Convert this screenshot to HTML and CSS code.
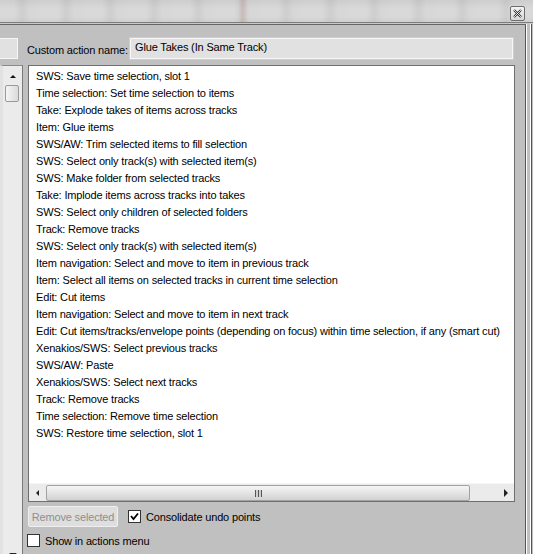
FILE: index.html
```html
<!DOCTYPE html>
<html lang="en">
<head>
  <meta charset="UTF-8" />
  <title>Custom Action</title>
  <link rel="stylesheet" href="styles.css">
</head>
<body>

<div class="titlebar">
  <button class="close-btn" title="Close">
    <svg width="9" height="9" viewBox="0 0 9 9">
      <path d="M1 1 L8 8 M8 1 L1 8" stroke="#333" stroke-width="2.2" />
      <path d="M1 1 L8 8 M8 1 L1 8" stroke="#fff" stroke-width="0.8" />
    </svg>
  </button>
</div>

<div class="workspace">
  <div class="side">
    <div class="stub-field"></div>
    <div class="vscroll">
      <span class="arrow-up"></span>
      <div class="vthumb"></div>
      <span class="arrow-down"></span>
    </div>
  </div>

  <div class="panel">
    <div class="name-row">
      <label class="name-label">Custom action name:</label>
      <div class="name-field">Glue Takes (In Same Track)</div>
    </div>

    <div class="action-list">
      <ul class="rows">
        <li>SWS: Save time selection, slot 1</li>
        <li>Time selection: Set time selection to items</li>
        <li>Take: Explode takes of items across tracks</li>
        <li>Item: Glue items</li>
        <li>SWS/AW: Trim selected items to fill selection</li>
        <li>SWS: Select only track(s) with selected item(s)</li>
        <li>SWS: Make folder from selected tracks</li>
        <li>Take: Implode items across tracks into takes</li>
        <li>SWS: Select only children of selected folders</li>
        <li>Track: Remove tracks</li>
        <li>SWS: Select only track(s) with selected item(s)</li>
        <li>Item navigation: Select and move to item in previous track</li>
        <li>Item: Select all items on selected tracks in current time selection</li>
        <li>Edit: Cut items</li>
        <li>Item navigation: Select and move to item in next track</li>
        <li>Edit: Cut items/tracks/envelope points (depending on focus) within time selection, if any (smart cut)</li>
        <li>Xenakios/SWS: Select previous tracks</li>
        <li>SWS/AW: Paste</li>
        <li>Xenakios/SWS: Select next tracks</li>
        <li>Track: Remove tracks</li>
        <li>Time selection: Remove time selection</li>
        <li>SWS: Restore time selection, slot 1</li>
      </ul>
      <div class="hscroll">
        <div class="hbtn"><span class="arrow-left"></span></div>
        <div class="hthumb"><span class="grip"></span></div>
        <div class="htrack"></div>
        <div class="hbtn"><span class="arrow-right"></span></div>
      </div>
    </div>

    <div class="button-row">
      <button class="btn" disabled>Remove selected</button>
      <label class="check"><span class="box">
        <svg width="9" height="9" viewBox="0 0 9 9"><path d="M1 4 L3.5 7 L8 1.5" fill="none" stroke="#000" stroke-width="1.8" /></svg>
      </span>Consolidate undo points</label>
    </div>

    <div class="check-row">
      <label class="check"><span class="box"></span>Show in actions menu</label>
    </div>
  </div>

  <div class="edge"></div>
</div>

</body>
</html>
```

FILE: styles.css
```css
body {
  margin: 0;
  width: 533px;
  height: 554px;
  overflow: hidden;
  background-color: #c0c0c0;
  font-family: "Liberation Sans", Arial, sans-serif;
  font-size: 11px;
  letter-spacing: -0.16px;
  color: #000;
}

/* blurred strip of the host window behind the dialog */
.titlebar {
  height: 22px;
  border-bottom: 1px solid #7c7c7c;
  display: flex;
  justify-content: flex-end;
  align-items: flex-start;
  padding-right: 8px;
  background:
    linear-gradient(to bottom, rgba(0,0,0,0.05), rgba(0,0,0,0) 40%, rgba(0,0,0,0) 75%, rgba(0,0,0,0.04)),
    linear-gradient(90deg, rgba(0,0,0,0) 238px, rgba(190,90,90,0.18) 243px, rgba(0,0,0,0) 248px),
    repeating-linear-gradient(90deg, #d9d9d9 0, #d9d9d9 14px, #cecece 22px, #d7d7d7 30px, #d9d9d9 44px);
}
.close-btn {
  margin-top: 6px;
  width: 15px;
  height: 15px;
  padding: 0;
  border: 1px solid #6e6e6e;
  border-radius: 2px;
  background: linear-gradient(#f4f4f4, #d6d6d6);
  display: flex;
  align-items: center;
  justify-content: center;
}

.workspace {
  display: flex;
  height: 530px;
  border-top: 1px solid #c9c9c9;
}

/* left pane, mostly cut off */
.side {
  width: 23px;
  border-top: 1px solid #666;
  display: flex;
  flex-direction: column;
}
.stub-field {
  margin-top: 13px;
  width: 17px;
  height: 19px;
  background: #e1e1e1;
  border: 1px solid #f6f6f6;
  border-left: none;
}
.vscroll {
  margin-top: 6px;
  flex: 1;
  position: relative;
  background: #ebebeb;
  border-top: 1px solid #8a8a8a;
  border-right: 1px solid #7a7a7a;
  border-left: 3px solid #e2e2e2;
}
.arrow-up {
  position: absolute;
  left: 7px;
  top: 9px;
  border: 3px solid transparent;
  border-bottom: 3px solid #111;
  border-top: none;
}
.arrow-down {
  position: absolute;
  left: 6px;
  bottom: -2px;
  border: 4px solid transparent;
  border-top: 3px solid #222;
  border-bottom: none;
}
.vthumb {
  margin: 19px 0 0 2px;
  width: 12px;
  height: 15px;
  border: 1px solid #9a9a9a;
  border-radius: 2px;
  background: linear-gradient(90deg, #f5f5f5, #dadada);
}

.panel {
  width: 497px;
  padding-left: 5px;
  border-top: 1px solid #666;
  border-right: 1px solid #555;
}

.name-row {
  display: flex;
  align-items: center;
  gap: 6px;
  margin-top: 13px;
  height: 21px;
}
.name-label {
  width: 97px;
  margin-left: -1px;
  padding-top: 2px;
  white-space: nowrap;
}
.name-field {
  box-sizing: border-box;
  width: 383px;
  height: 21px;
  line-height: 17px;
  padding-left: 4px;
  background: #e1e1e1;
  border: 1px solid #f7f7f7;
  outline: 1px solid #cdcdcd;
}

.action-list {
  margin-top: 6px;
  width: 487px;
  height: 437px;
  box-sizing: border-box;
  border: 1px solid #6f6f6f;
  background: #fff;
  display: flex;
  flex-direction: column;
}
.rows {
  list-style: none;
  margin: 0;
  padding: 2px 0 0 7px;
  flex: 1;
  white-space: nowrap;
  overflow: hidden;
}
.rows li {
  height: 17px;
  line-height: 17px;
}

.hscroll {
  height: 17px;
  display: flex;
  background: #ebebeb;
  border-top: 1px solid #f6f6f6;
}
.hbtn {
  width: 17px;
  display: flex;
  align-items: center;
  justify-content: center;
}
.arrow-left {
  border: 3px solid transparent;
  border-right: 3px solid #222;
  border-left: none;
}
.arrow-right {
  border: 4px solid transparent;
  border-left: 4px solid #222;
  border-right: none;
}
.hthumb {
  width: 422px;
  height: 14px;
  margin-top: 1px;
  border: 1px solid #a2a2a2;
  border-radius: 2px;
  background: linear-gradient(#f6f6f6, #e4e4e4 50%, #d2d2d2);
  display: flex;
  align-items: center;
  justify-content: center;
}
.grip {
  width: 7px;
  height: 7px;
  background: repeating-linear-gradient(90deg, #555 0 1px, #cfcfcf 1px 3px);
}
.htrack {
  flex: 1;
}

.button-row {
  display: flex;
  align-items: center;
  gap: 10px;
  margin-top: 4px;
  height: 21px;
}
.btn {
  width: 90px;
  height: 21px;
  padding: 0;
  font: inherit;
  letter-spacing: inherit;
  color: #8f8f8f;
  background: #dedede;
  border: 1px solid #efefef;
  border-radius: 2px;
}
.check {
  display: flex;
  align-items: center;
  gap: 5px;
}
.box {
  width: 11px;
  height: 11px;
  border: 1px solid #333;
  background: #fff;
  display: flex;
  align-items: center;
  justify-content: center;
}

.check-row {
  margin-top: 7px;
  margin-left: -1px;
}

.edge {
  width: 7px;
  background: linear-gradient(90deg, #fff 0 1px, #c0c0c0 1px 4px, #fff 4px 5px, #555 5px 6px, #c0c0c0 6px);
}
```
